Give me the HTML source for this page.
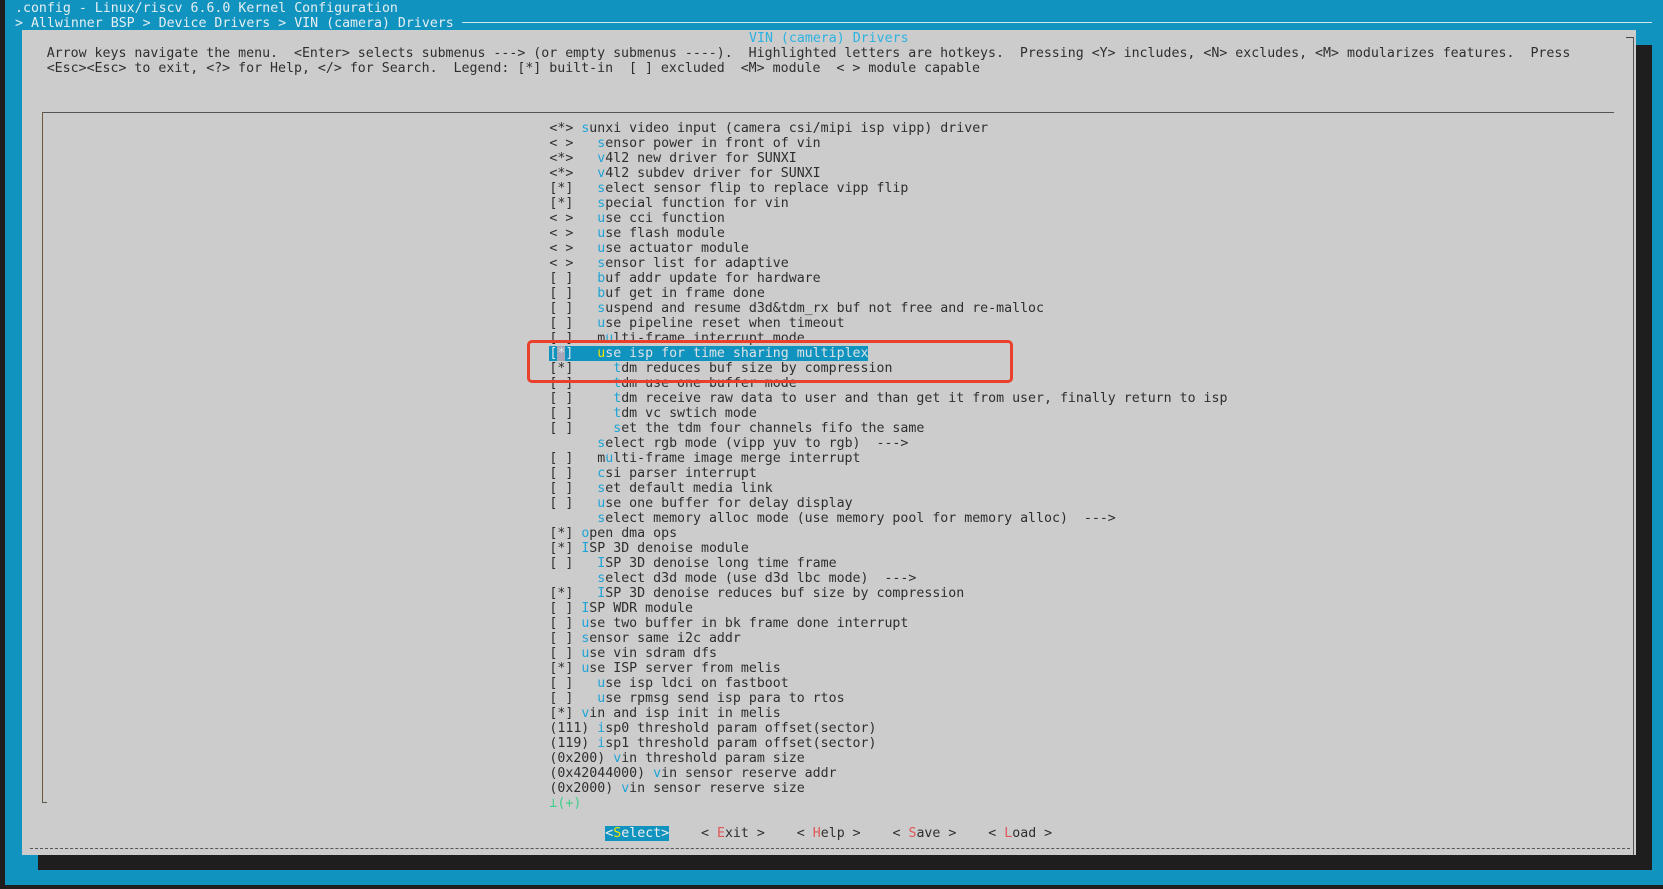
<!DOCTYPE html>
<html><head><meta charset="utf-8"><style>
html,body{margin:0;padding:0}
body{width:1663px;height:889px;background:#1193bf;position:relative;overflow:hidden;font-family:"DejaVu Sans Mono","Liberation Mono",monospace;font-size:13.25px;}
.l{position:absolute;white-space:pre;line-height:15px;height:15px;color:#2e2e2e;margin-top:1px}
.h{color:#1ea4d6}
.y{color:#f2e600}
.r{color:#e05858}
.abs{position:absolute}
</style></head><body>
<div class="abs" style="left:0;top:0;width:5px;height:889px;background:#1e1e1e"></div>
<div class="abs" style="left:0;top:885px;width:1663px;height:4px;background:#1e1e1e"></div>
<div class="l" style="top:0;left:15px;color:#e4eef2">.config - Linux/riscv 6.6.0 Kernel Configuration</div>
<div class="l" style="top:15px;left:15px;color:#e4eef2">&gt; Allwinner BSP &gt; Device Drivers &gt; VIN (camera) Drivers</div>
<div class="abs" style="left:462px;top:22px;width:1190px;height:1px;background:#cfe6ee"></div>
<div class="abs" style="left:38px;top:855px;width:1614px;height:15px;background:#1e1e1e"></div>
<div class="abs" style="left:1636px;top:45px;width:16px;height:825px;background:#1e1e1e"></div>
<div class="abs" style="left:22px;top:30px;width:1614px;height:825px;background:#cccccc"></div>
<div class="abs" style="left:1626px;top:37px;width:8px;height:1px;background:#444"></div>
<div class="abs" style="left:1633px;top:37px;width:1px;height:818px;background:#555"></div>
<div class="l" style="top:30px;left:749px;color:#2cb2e0">VIN (camera) Drivers</div>
<div class="l" style="top:45px;left:46.7px">Arrow keys navigate the menu.  &lt;Enter&gt; selects submenus ---&gt; (or empty submenus ----).  Highlighted letters are hotkeys.  Pressing &lt;Y&gt; includes, &lt;N&gt; excludes, &lt;M&gt; modularizes features.  Press</div>
<div class="l" style="top:60px;left:46.7px">&lt;Esc&gt;&lt;Esc&gt; to exit, &lt;?&gt; for Help, &lt;/&gt; for Search.  Legend: [*] built-in  [ ] excluded  &lt;M&gt; module  &lt; &gt; module capable</div>
<div class="abs" style="left:42px;top:112px;width:1572px;height:1px;background:#555"></div>
<div class="abs" style="left:42px;top:112px;width:1px;height:691px;background:#6a5a3a"></div>
<div class="abs" style="left:42px;top:802px;width:5px;height:1px;background:#555"></div>
<div class="abs" style="left:30px;top:848px;width:1600px;height:1px;border-top:1px dashed #555"></div>
<div class="abs" style="left:549.4px;top:346px;width:319px;height:15px;background:#1193bf"></div>
<div class="abs" style="left:557.4px;top:346px;width:8px;height:15px;background:#a8a8b8"></div>
<div class="l" style="top:120px;left:549.4px">&lt;*&gt; <span class="h">s</span>unxi video input (camera csi/mipi isp vipp) driver</div>
<div class="l" style="top:135px;left:549.4px">&lt; &gt;   <span class="h">s</span>ensor power in front of vin</div>
<div class="l" style="top:150px;left:549.4px">&lt;*&gt;   <span class="h">v</span>4l2 new driver for SUNXI</div>
<div class="l" style="top:165px;left:549.4px">&lt;*&gt;   <span class="h">v</span>4l2 subdev driver for SUNXI</div>
<div class="l" style="top:180px;left:549.4px">[*]   <span class="h">s</span>elect sensor flip to replace vipp flip</div>
<div class="l" style="top:195px;left:549.4px">[*]   <span class="h">s</span>pecial function for vin</div>
<div class="l" style="top:210px;left:549.4px">&lt; &gt;   <span class="h">u</span>se cci function</div>
<div class="l" style="top:225px;left:549.4px">&lt; &gt;   <span class="h">u</span>se flash module</div>
<div class="l" style="top:240px;left:549.4px">&lt; &gt;   <span class="h">u</span>se actuator module</div>
<div class="l" style="top:255px;left:549.4px">&lt; &gt;   <span class="h">s</span>ensor list for adaptive</div>
<div class="l" style="top:270px;left:549.4px">[ ]   <span class="h">b</span>uf addr update for hardware</div>
<div class="l" style="top:285px;left:549.4px">[ ]   <span class="h">b</span>uf get in frame done</div>
<div class="l" style="top:300px;left:549.4px">[ ]   <span class="h">s</span>uspend and resume d3d&amp;tdm_rx buf not free and re-malloc</div>
<div class="l" style="top:315px;left:549.4px">[ ]   <span class="h">u</span>se pipeline reset when timeout</div>
<div class="l" style="top:330px;left:549.4px">[ ]   m<span class="h">u</span>lti-frame interrupt mode</div>
<div class="l" style="top:345px;left:549.4px;color:#dde3e6">[*]   <span class="y">u</span>se isp for time sharing multiplex</div>
<div class="l" style="top:360px;left:549.4px">[*]     <span class="h">t</span>dm reduces buf size by compression</div>
<div class="l" style="top:375px;left:549.4px">[ ]     <span class="h">t</span>dm use one buffer mode</div>
<div class="l" style="top:390px;left:549.4px">[ ]     <span class="h">t</span>dm receive raw data to user and than get it from user, finally return to isp</div>
<div class="l" style="top:405px;left:549.4px">[ ]     <span class="h">t</span>dm vc swtich mode</div>
<div class="l" style="top:420px;left:549.4px">[ ]     <span class="h">s</span>et the tdm four channels fifo the same</div>
<div class="l" style="top:435px;left:549.4px">      <span class="h">s</span>elect rgb mode (vipp yuv to rgb)  ---&gt;</div>
<div class="l" style="top:450px;left:549.4px">[ ]   m<span class="h">u</span>lti-frame image merge interrupt</div>
<div class="l" style="top:465px;left:549.4px">[ ]   <span class="h">c</span>si parser interrupt</div>
<div class="l" style="top:480px;left:549.4px">[ ]   <span class="h">s</span>et default media link</div>
<div class="l" style="top:495px;left:549.4px">[ ]   <span class="h">u</span>se one buffer for delay display</div>
<div class="l" style="top:510px;left:549.4px">      <span class="h">s</span>elect memory alloc mode (use memory pool for memory alloc)  ---&gt;</div>
<div class="l" style="top:525px;left:549.4px">[*] <span class="h">o</span>pen dma ops</div>
<div class="l" style="top:540px;left:549.4px">[*] <span class="h">I</span>SP 3D denoise module</div>
<div class="l" style="top:555px;left:549.4px">[ ]   <span class="h">I</span>SP 3D denoise long time frame</div>
<div class="l" style="top:570px;left:549.4px">      <span class="h">s</span>elect d3d mode (use d3d lbc mode)  ---&gt;</div>
<div class="l" style="top:585px;left:549.4px">[*]   <span class="h">I</span>SP 3D denoise reduces buf size by compression</div>
<div class="l" style="top:600px;left:549.4px">[ ] <span class="h">I</span>SP WDR module</div>
<div class="l" style="top:615px;left:549.4px">[ ] <span class="h">u</span>se two buffer in bk frame done interrupt</div>
<div class="l" style="top:630px;left:549.4px">[ ] <span class="h">s</span>ensor same i2c addr</div>
<div class="l" style="top:645px;left:549.4px">[ ] <span class="h">u</span>se vin sdram dfs</div>
<div class="l" style="top:660px;left:549.4px">[*] <span class="h">u</span>se ISP server from melis</div>
<div class="l" style="top:675px;left:549.4px">[ ]   <span class="h">u</span>se isp ldci on fastboot</div>
<div class="l" style="top:690px;left:549.4px">[ ]   <span class="h">u</span>se rpmsg send isp para to rtos</div>
<div class="l" style="top:705px;left:549.4px">[*] <span class="h">v</span>in and isp init in melis</div>
<div class="l" style="top:720px;left:549.4px">(111) <span class="h">i</span>sp0 threshold param offset(sector)</div>
<div class="l" style="top:735px;left:549.4px">(119) <span class="h">i</span>sp1 threshold param offset(sector)</div>
<div class="l" style="top:750px;left:549.4px">(0x200) <span class="h">v</span>in threshold param size</div>
<div class="l" style="top:765px;left:549.4px">(0x42044000) <span class="h">v</span>in sensor reserve addr</div>
<div class="l" style="top:780px;left:549.4px">(0x2000) <span class="h">v</span>in sensor reserve size</div>
<div class="l" style="top:795px;left:549.4px;color:#3ccf8a">⊥(+)</div>
<div class="l" style="top:825px;left:605.3px;background:#1193bf;color:#f0f0f0">&lt;<span class="y">S</span>elect&gt;</div>
<div class="l" style="top:825px;left:701px">&lt; <span class="r">E</span>xit &gt;</div>
<div class="l" style="top:825px;left:796.8px">&lt; <span class="r">H</span>elp &gt;</div>
<div class="l" style="top:825px;left:892.5px">&lt; <span class="r">S</span>ave &gt;</div>
<div class="l" style="top:825px;left:988.3px">&lt; <span class="r">L</span>oad &gt;</div>
<div class="abs" style="left:527px;top:340px;width:480px;height:37px;border:3px solid #e8402a;border-radius:5px"></div>
</body></html>
